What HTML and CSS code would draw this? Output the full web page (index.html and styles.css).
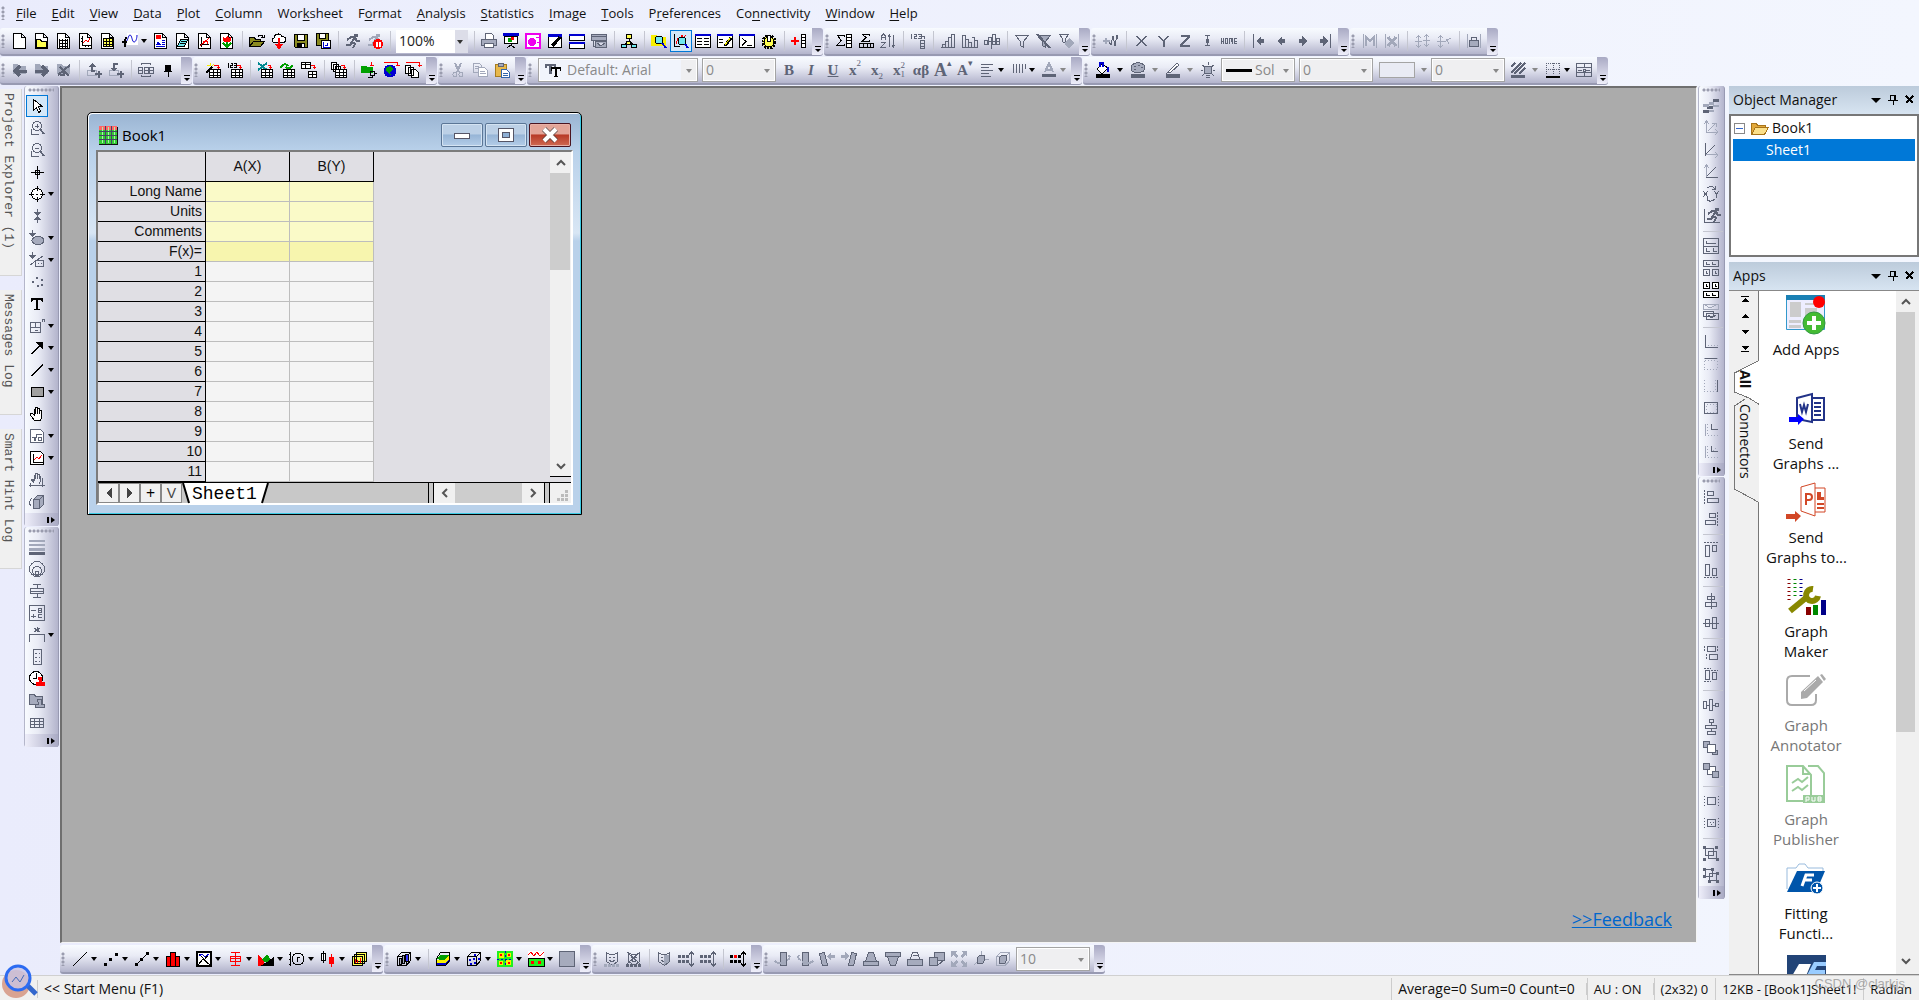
FILE: index.html
```html
<!DOCTYPE html>
<html lang="en">
<head>
<meta charset="utf-8">
<title>Book1</title>
<link rel="stylesheet" href="styles.css">
</head>
<body>
<svg class="defs" aria-hidden="true">
<symbol id="doc" viewBox="0 0 16 16"><path class="w" d="M1.5.5h8l4 4v11h-12zM9.5.5v4h4"/></symbol>
<symbol id="gr" viewBox="0 0 16 16"><path class="w" d="M4.5 7.5h11v8h-11zM4.5 10.5h11M4.5 13h11M8.5 8v7M12.5 8v7"/></symbol>
<symbol id="folder" viewBox="0 0 16 16"><path class="f l" d="M1 2h5l1 2h7v8H1z"/></symbol>
<symbol id="lens" viewBox="0 0 16 16"><circle cx="8" cy="6" r="4.5"/><path stroke-width="2" d="M11 9l4 5"/><path d="M2.5 9v5.500h7"/></symbol>
<symbol id="run" viewBox="0 0 16 16"><circle class="f" cx="11" cy="2.500" r="2"/><path stroke-width="2" d="M2 7l4-3h4l-3 5 3 2-2 4M7 9l-2 3H1M10 5l2 3h3"/></symbol>
<symbol id="cube" viewBox="0 0 16 16"><path d="M1.500 5.500l4-4h9v8l-4 5h-9zM1.500 5.500h9v9M10.500 5.500l4-4"/></symbol>
<symbol id="pin" viewBox="0 0 12 12"><path d="M3.500 1.500h5v5h-5zM1 6.500h10M6 7v4M7.500 2v4"/></symbol>
<symbol id="x" viewBox="0 0 12 12"><path stroke-width="2" d="M2 2l7 7M9 2l-7 7"/></symbol>
<symbol id="mask" viewBox="0 0 16 16"><path d="M2.500 1.500l3 2h5l3-2v9l-5 4-6-4zM5 6h2M9 6h2M5 9l3 2 3-2"/></symbol>
<symbol id="dots" viewBox="0 0 16 16"><path stroke-dasharray="3 1" stroke-width="3" d="M0 5.500h11M0 10.500h11"/><path d="M13.500 1v14M11 3.500l2.500-2.500 2.500 2.500M11 12.500l2.500 2.500 2.500-2.500"/></symbol>
</svg>

<nav class="menu" aria-label="Main menu">
<i class="grip"></i>
<a href="#"><u>F</u>ile</a><a href="#"><u>E</u>dit</a><a href="#"><u>V</u>iew</a><a href="#"><u>D</u>ata</a><a href="#"><u>P</u>lot</a><a href="#"><u>C</u>olumn</a><a href="#">Wor<u>k</u>sheet</a><a href="#">F<u>o</u>rmat</a><a href="#"><u>A</u>nalysis</a><a href="#"><u>S</u>tatistics</a><a href="#"><u>I</u>mage</a><a href="#"><u>T</u>ools</a><a href="#">P<u>r</u>eferences</a><a href="#">Co<u>n</u>nectivity</a><a href="#"><u>W</u>indow</a><a href="#"><u>H</u>elp</a>
</nav>

<div class="dock">
<div class="bar k"><i class="grip"></i>
<button title="New project"><svg><use href="#doc"/></svg></button>
<button title="New folder"><svg><use href="#doc"/><path class="yy" d="M2.500 6.500h4l1 2h5v6h-10z"/></svg></button>
<button title="New workbook"><svg><use href="#doc"/><path d="M3 7.500h9M3 10.500h9M3 13.500h9M3.500 6v9M6.500 6v9M9.500 6v9M11.500 6v9"/></svg></button>
<button title="New graph"><svg><use href="#doc"/><path d="M4.500 3v9.500h8M3 5h2M3 8h2M7 14v-2M10 14v-2"/><path class="r" d="M5 10l3-3 2 2 2-4"/></svg></button>
<button title="New matrix"><svg><use href="#doc"/><path class="yy" d="M3.500 5.500h9v8h-9zM3 8.500h9M3 11h9M6.500 5v9M9.500 5v9"/></svg></button>
<button class="d" title="New function"><svg><path class="f w" d="M5 0h11v12H5z"/><path class="b smooth" d="M3 9c3 0 3-7 5-7s2 7 4 7 3-4 3-7"/><path stroke-width="2" d="M5 5c-3 0-2 4-2 9M0 9h5"/></svg></button>
<button title="New layout"><svg><use href="#doc"/><path class="f r" d="M3 2h5v4H3z"/><path class="b" d="M9 7.500h3M9 9.500h3M9 11.500h3M3 13.500h9"/><path class="f b" d="M3 12l2-4 3 4z"/></svg></button>
<button title="New notes"><svg><use href="#doc"/><path class="cy" d="M5.500 6.500h7l-3 7h-7zM6 8.500h5M5 10.500h5"/></svg></button>
<button title="Digitize"><svg><use href="#doc"/><path d="M4.500 4v9.500M3 11.500h9"/><path class="r" d="M3 13L12 5M6 8h4v3"/></svg></button>
<button title="New image"><svg><use href="#doc"/><path class="f r" d="M4 4l2 1 2-2 2 2 2-1v4l-4 2-4-2z"/><path class="n" stroke-width="2" d="M8 9v5M4 10l4 4 4-4"/></svg></button>
<i class="sep"></i>
<button title="Open"><svg><path class="ol" d="M.5 13.500v-9h5l1 2h5v2M.5 13.500l4-5h11l-4 5z"/><path d="M9 3.500c2-2 4-2 5 0M12 4.500h3v-3"/></svg></button>
<button title="Open from cloud"><svg><path class="w" d="M3 9.500c-3-1-2-4 0-4 0-5 7-6 8-2 5 0 5 6 1 6z"/><path class="r" stroke-width="2" d="M8 5v10M5 11l3 4 3-4"/></svg></button>
<button title="Save project"><svg><path class="ol" d="M1.500 1.500h13v13h-12l-1-1z"/><path class="w" d="M4.500 1.500h7v6h-7z"/><path class="f" d="M4 10h8v4H4z"/><path class="f w" d="M9 11h2v3H9z"/></svg></button>
<button title="Save template"><svg><path class="ol" d="M1.500.500h12v12h-12z"/><path class="w" d="M4.500.500h6v5h-6z"/><path class="w" d="M6.500 7.500h9v8h-9z"/><path class="b" d="M8.500 9v5h6M10 12h2v-2"/></svg></button>
<i class="sep"></i>
<button class="g" title="Recalculate"><svg><use href="#run"/></svg></button>
<button class="g" title="Stop"><svg><use href="#run" class="l"/><circle class="f r" cx="11" cy="11" r="5"/><path class="wh" stroke-width="2" d="M9.500 9v5M12.500 9v5"/></svg></button>
<i class="sep"></i>
<div class="combo zoom"><select aria-label="Zoom"><option>100%</option></select></div>
<i class="sep"></i>
<button class="g" title="Print"><svg><path class="w" d="M4.500 6.500v-6h6l2 2v4"/><path class="fl" d="M.5 6.500h15v6H.5z"/><path class="w" d="M3.500 10.500h9v4h-9z"/></svg></button>
<button title="Slide show"><svg><path class="f b" d="M0 0h16v3H0z"/><path class="w" d="M1.500 3.500h13v7h-13z"/><circle class="f n" cx="7" cy="7" r="2.500"/><path class="f r" d="M8 4h3v3H8z"/><path d="M8 11v2M4 15l4-3 4 3"/></svg></button>
<button title="Send to slide"><svg class="mg"><path class="w" stroke-width="2" d="M1 1h14v14H1z"/><circle class="f" cx="7" cy="9" r="4"/><path d="M11 4h3M12 9h2"/></svg></button>
<button title="Custom routine"><svg><path class="w" d="M1.500 1.500h13v13h-13z"/><path class="f b" d="M1 1h14v3H1z"/><path stroke-width="3" d="M5 13l4-4 4-5"/></svg></button>
<button title="Tile"><svg><path class="w" d="M.5 1.500h15v6H.5zM.5 9.500h15v6H.5z"/><path class="f b" d="M0 1h16v2H0zM0 9h16v2H0z"/></svg></button>
<button class="g" title="Duplicate"><svg><path class="fl" d="M.5 1.500h15v6H.5zM4.500 8.500h11v6h-11zM1 3.500h14M2 13.500h3M2 8v5M6 10l4 3 4-3"/></svg></button>
<i class="sep"></i>
<button title="Project tree"><svg><path d="M8 4v4M3.500 12l4-4h1l4 4"/><path class="yy" d="M5.500 1.500h5v4h-5zM5.500 8.500h4v3h-4z"/><path class="cy" d="M.5 11.500h5v3h-5zM10.500 11.500h5v3h-5z"/></svg></button>
<i class="sep"></i>
<button title="Project explorer"><svg><path class="f y" d="M0 2h5l2 2h8v9H0z"/><circle class="cy" cx="8" cy="7" r="4"/><path class="b" stroke-width="2" d="M11 10l4 5"/></svg></button>
<button class="on" title="Object manager"><svg><path d="M1.500 1v12.500h5"/><path class="r" d="M3 11l2-6 2 2 2-5 1 3 3-3"/><circle class="cy" cx="9" cy="8" r="4"/><path class="b" stroke-width="2" d="M12 11l3 4"/></svg></button>
<button title="Results log"><svg><path class="w" d="M.5 1.500h15v13H.5z"/><path class="f b" d="M0 1h16v2H0z"/><path d="M2 5.500h5M9 5.500h5M2 8.500h5M9 8.500h5M2 11.500h5M9 11.500h5"/></svg></button>
<button title="Script window"><svg><path class="w" d="M.5 1.500h15v13H.5z"/><path class="f b" d="M0 1h16v2H0z"/><path d="M2 6.500h4M2 9.500h4"/><path stroke-width="3" d="M8 13l6-8"/><path class="y" d="M8 12l6-8"/></svg></button>
<button title="Command window"><svg><path class="w" d="M.5 1.500h15v13H.5z"/><path class="f b" d="M0 1h16v2H0z"/><path d="M3 5l4 3.500-4 4M8 12.500h5"/></svg></button>
<button title="Code builder"><svg><circle class="yy" stroke-dasharray="2 1" stroke-width="3" cx="8" cy="9" r="6"/><circle class="yy" cx="8" cy="9" r="5"/><path class="w" d="M6.500 2.500h3v6h-3z"/></svg></button>
<i class="sep"></i>
<button title="Add column"><svg><path class="r" stroke-width="2" d="M0 8h8M4 4v8"/><path class="w" d="M10.500 1.500h4v13h-4zM10 4.500h5M10 7.500h5M10 10.500h5"/></svg></button>
<button class="m" title="Toolbar options"></button></div>

<div class="bar g"><i class="grip"></i>
<button class="k" title="Column statistics"><svg><path d="M8 4V2.500H1.500L5 7.500l-4 5h7V11"/><path class="w" d="M10.500 1.500h5v13h-5zM10 4.500h5M10 7.500h5M10 10.500h5"/></svg></button>
<button class="k" title="Row statistics"><svg><path d="M11 3V1.500H4.500L8 4.500l-4 4h7V7M1.500 10.500h14v4h-14zM5.500 10v5M9 10v5M12.500 10v5"/></svg></button>
<button title="Sort"><svg><path d="M1.500 7V3l2-2 2 2v4M1 4.500h4M1 9.500h4l-4 5h5M9.500 2v12M8 4l1.500-2 1.500 2M13.500 2v12M12 12l1.500 2 1.500-2"/></svg></button>
<i class="sep"></i>
<button title="Set column values"><svg><path d="M1.500 1v5M4 1.500h2v2H4v2h3M8 1.500h3v4H8M9 3.500h2M12 3h2v3"/><path d="M10.500 7.500h4v8h-4zM10 10.500h5M10 13h5"/></svg></button>
<i class="sep"></i>
<button title="Normal"><svg><path d="M.5 14.500h14v-13h-3v13M11.500 4.500h-3v10M8.500 8.500h-3v6M5.500 11.500h-3v3"/></svg></button>
<button title="Histogram"><svg><path d="M.5 14.500v-12h3v12M3.500 6.500h3v8M6.500 9.500h3v5M9.500 4.500h3v10M12.500 7.500h3v7H.5"/></svg></button>
<button title="Discrete"><svg><path d="M.5 11.500v-4h3v4zM4.500 11.500v-7h3v11M8.500 1.500h3v10h-3zM12.500 5.500h3v6h-3zM4 8h11"/></svg></button>
<i class="sep"></i>
<button title="Filter"><svg><path d="M1.500 2.500h13l-5 6v6l-3-2v-4z"/></svg></button>
<button title="Disable filter"><svg><path class="fl" d="M1.500 2.500h13l-5 6v6l-3-2v-4z"/><path stroke-width="2" d="M1 1l13 14"/></svg></button>
<button title="Reapply filter"><svg><path d="M1.500 1.500h9l-3 4v5l-3-2v-3z"/><path class="f l" d="M7 9l4-4 5 5-5 5-4-3z"/></svg></button>
<button class="m" title="Toolbar options"></button></div>

<div class="bar g"><i class="grip"></i>
<button title="Add plot"><svg><path stroke-width="2" class="l" d="M0 8h7M3 5v6"/><path d="M6 9l2 3 2-9 2 10 2-11 1 4"/></svg></button>
<i class="sep"></i>
<button title="X"><svg><path d="M3 3l10 10M13 3L3 13"/><path d="M4 3l10 10M14 3L4 13"/></svg></button>
<button title="Y"><svg><path d="M3 3l5 5v6M13 3L8 8M4 3l5 5v6M14 3L9 8"/></svg></button>
<button title="Z"><svg><path stroke-width="2" d="M4 3h8v1l-8 8v1h9"/></svg></button>
<button title="Error bar"><svg><path d="M5.500 2.500h5M5.500 12.500h5M8 3v10"/><path class="f" d="M7 6h3v4H7z"/></svg></button>
<button title="Home"><svg><path d="M.5 5v6M2.500 5v6M.5 8h2M4.500 5.500h2v5h-2zM8.500 11V5.500h3V11M10 6v3M16 5.500h-2.500v5H16M13 8h3"/></svg></button>
<i class="sep"></i>
<button title="First"><svg><path class="f" d="M2 1h1v14H2zM5 8l5-5v3h3v4h-3v3z"/></svg></button>
<button title="Previous"><svg><path class="f" d="M4 8l5-5v3h3v4H9v3z"/></svg></button>
<button title="Next"><svg><path class="f" d="M12 8L7 3v3H4v4h3v3z"/></svg></button>
<button title="Last"><svg><path class="f" d="M11 8L6 3v3H3v4h3v3zM13 1h1v14h-1z"/></svg></button>
<button class="m" title="Toolbar options"></button></div>

<div class="bar l"><i class="grip"></i>
<button title="Mask"><svg><path d="M1.500 1v14M14.500 1v14"/><path stroke-width="2" d="M4 13V4l4 4 4-4v9"/></svg></button>
<button title="Unmask"><svg><path d="M1.500 1v14M14.500 1v14"/><path stroke-width="3" d="M4 4l8 9M12 4l-8 9"/></svg></button>
<i class="sep"></i>
<button title="Move up"><svg><path d="M4.500 3v11M1 8h7M2 5l2.500-2L7 5M2 12l2.500 2L7 12M12.500 2v11M9 7h7M10 4l2.500-2L15 4M10 11l2.500 2 2.500-2"/></svg></button>
<button title="Move down"><svg><path d="M4.500 3v11M1 8h7M2 5l2.500-2L7 5M2 12l2.500 2L7 12M8 9l7-4M10 6l3 5"/></svg></button>
<i class="sep"></i>
<button class="g" title="Lock"><svg><path class="l" d="M1.500 1v14M14.500 1v14"/><path class="fl" d="M3.500 7.500h9v6h-9z"/><path d="M5.500 7V4h5v3"/></svg></button>
<button class="m" title="Toolbar options"></button></div>
</div>

<div class="dock">
<div class="bar g"><i class="grip"></i>
<button title="Back"><svg><use href="#folder"/><path stroke-width="3" d="M15 9H4M8 4L3 9l5 5"/></svg></button>
<button title="Forward"><svg><use href="#folder"/><path stroke-width="3" d="M1 9h11M8 4l5 5-5 5"/></svg></button>
<button title="Up"><svg><use href="#folder"/><path stroke-width="2" d="M2 13L14 3M4 5l9 9M4 13h4V9"/></svg></button>
<i class="sep"></i>
<button title="Import up"><svg><path class="l" d="M1.500 8.500h9v5h-9z"/><path class="f" d="M2 5l4-4 4 4H7v3H9v2H5V5z"/><path stroke-width="2" d="M9 12h7M12.500 8.500v7"/></svg></button>
<button title="Import down"><svg><path class="l" d="M1.500 8.500h9v5h-9z"/><path class="f" d="M2 6l4 4 3-4H7V3h3V1H5v5z"/><path stroke-width="2" d="M9 12h7M12.500 8.500v7"/></svg></button>
<i class="sep"></i>
<button title="Batch"><svg><path d="M3.500 3v-1.500h9V3M3.500 13v1.500h9V13M.5 5.500h4v6h-4zM6 5.500h4v6H6zM11.500 5.500h4v6h-4zM0 8h5M6 8h4M11 8h5"/></svg></button>
<button class="k" title="Pin"><svg><path class="f" d="M5 3h6v6H5zM4 9h8v1H4zM7.500 10h1v5h-1z"/></svg></button>
<button class="m" title="Toolbar options"></button></div>

<div class="bar k"><i class="grip"></i>
<button title="Import wizard"><svg><path stroke-width="2" d="M1 11l6-6"/><path class="y" d="M5 1v3M2 3l3 1M9 2L7 4"/><path class="r" d="M9 3.500h4.500V7M12 5.500h3"/><use href="#gr"/></svg></button>
<button title="Import single"><svg><path d="M1.500 1v5M3.500 1.500h2v2h-2v2h2M7 1.500h2v4H7M7 3.500h2"/><path class="r" d="M10 3.500h3.500V7M12 5.500h3"/><use href="#gr"/></svg></button>
<i class="sep"></i>
<button title="Import spreadsheet"><svg><path class="t" stroke-width="2" d="M1 1l9 7M10 1L1 8"/><path class="r" d="M11 3.500h2.500V7M12 5.500h3"/><use href="#gr"/></svg></button>
<button title="Re-import"><svg><path class="n" stroke-width="2" d="M2 6c1-5 6-4 7-2M13 3c0 3-4 4-6 2"/><use href="#gr"/></svg></button>
<button title="Connect table"><svg><path class="w" d="M.5.500h9v6h-9zM.5 2.500h9M4.500 1v6M7.500 9.500h8v6h-8zM7.500 12h8M11.500 10v6"/><path class="r" d="M10 3.500h3.500V7M12 5.500h3"/></svg></button>
<i class="sep"></i>
<button title="Multiple files"><svg><path class="w" d="M.5.500h5v7h-5zM2.500 2.500h5v7h-5zM4.500 4.500h5v7h-5z"/><path class="r" d="M10 3.500h3.500V7M12 5.500h3"/><use href="#gr"/></svg></button>
<i class="sep"></i>
<button title="Database"><svg><path class="f n" d="M0 4h5l1 1h6v6H0z"/><path class="r" d="M10.500 0v4M8.500 3h4"/><path d="M9.500 9.500h4v4h-4zM13 11.500h3M11.500 13v2h-5"/></svg></button>
<button title="Web import"><svg><circle class="f b" cx="7" cy="9" r="6.500"/><path class="f n" d="M4 5l4-1 2 3-3 3 1 3-3-2-2-3z"/><path class="r" d="M1 .5h13.500V4M12.500 3h4"/></svg></button>
<button title="Copy files"><svg><path class="w" d="M.5 3.500h5v8h-5zM3.500 5.500h5v8h-5zM6.500 7.500h4l3 3v5h-7z"/><path class="r" d="M1 .5h13.500V5M12.500 3h4"/></svg></button>
<button class="m" title="Toolbar options"></button></div>

<div class="bar l"><i class="grip"></i>
<button title="Cut"><svg><path stroke-width="2" d="M5 1l4 9M11 1L7 10"/><circle cx="5" cy="12.500" r="2"/><circle cx="11" cy="12.500" r="2"/></svg></button>
<button title="Copy"><svg><path d="M1.500 1.500h6l2 2v7h-8zM3 4h4M3 6h5"/><path class="w" d="M6.500 5.500h6l3 3v6h-9zM8 9h5M8 11h6"/></svg></button>
<button title="Paste"><svg><path class="go" d="M1.500 2.500h11v12h-11z"/><path class="fl g" d="M4.500 1.500h5v3h-5z"/><path class="w bl" d="M7.500 7.500h5l3 3v5h-8zM9 11h5M9 13h5"/></svg></button>
<button class="m" title="Toolbar options"></button></div>

<div class="bar g"><i class="grip"></i>
<div class="combo dis font"><svg class="tt"><path class="f" d="M0 2h11v4H9V4H7v8H4V4H2v2H0z"/><path class="f blk" d="M6 5h10v4h-1V7h-3v7h1v1H9v-1h1V7H7v2H6z"/></svg><select aria-label="Font" disabled><option>Default: Arial</option></select></div>
<div class="combo dis"><select aria-label="Font size" disabled><option>0</option></select></div>
<button class="ser" title="Bold">B</button>
<button class="ser it" title="Italic">I</button>
<button class="ser un" title="Underline">U</button>
<button class="ser" title="Superscript">x<sup>2</sup></button>
<button class="ser" title="Subscript">x<sub>2</sub></button>
<button class="ser" title="Super and subscript">x<span class="both"><b>2</b><b>1</b></span></button>
<button class="ser" title="Greek">αβ</button>
<button class="ser big" title="Increase font">A<sup>▴</sup></button>
<button class="ser" title="Decrease font">A<sup>▾</sup></button>
<button class="d" title="Alignment"><svg><path d="M2 2.500h12M2 5.500h8M2 8.500h12M2 11.500h8M2 14.500h10"/></svg></button>
<button class="d" title="Line spacing"><svg><path d="M3.500 2v9M6.500 2v9M9.500 2v9M12.500 2v9M15 2v5"/></svg></button>
<button class="d ga" title="Font color"><svg><path class="l" stroke-width="2" d="M4 10l4-9 4 9M5 7.500h6"/><path class="f" d="M1 12h14v3H1z"/></svg></button>
<button class="m" title="Toolbar options"></button></div>

<div class="bar g"><i class="grip"></i>
<button class="d wide k" title="Fill color"><svg><path class="w" d="M2 7l5-5 6 4-6 6z"/><path class="b" stroke-width="2" d="M5 5V1h3v4M13 5v5"/><path class="f" d="M1 12h14v4H1z"/></svg></button>
<button class="d wide ga" title="Palette"><svg><path class="fl" d="M2 3c3-3 9-3 12 0 2 3 0 7-3 7H4C0 9 1 6 2 3zM4 4h2M8 3h2M4 7h2M11 5h2"/><path class="f" d="M1 12h14v4H1z"/></svg></button>
<button class="d wide ga" title="Line color"><svg><path class="w" d="M4 9l8-8 2 2-8 7-4 1z"/><path class="f" d="M1 12h14v4H1z"/></svg></button>
<button title="Lighting"><svg><circle class="fl" cx="8" cy="8" r="4"/><path d="M8 0v3M1 8h2M13 8h2M2 3l3 2M14 3l-3 2M2 14l3-3M14 14l-3-3M6 13h4M6 15h4"/></svg></button>
<div class="combo dis line"><svg class="ln"><path class="blk" stroke-width="3" d="M0 8h26"/></svg><select aria-label="Line style" disabled><option>Sol</option></select></div>
<div class="combo dis"><select aria-label="Line width" disabled><option>0</option></select></div>
<button class="swatch ga" title="Pattern color"><i></i></button>
<div class="combo dis"><select aria-label="Pattern width" disabled><option>0</option></select></div>
<button class="d wide ga" title="Fill pattern"><svg><path stroke-width="2" d="M1 5l4-4M1 11L11 1M4 12L15 1M9 12l6-6"/><path class="f" d="M1 13h14v3H1z"/></svg></button>
<button class="d" title="Borders"><svg><path stroke-dasharray="1 1" d="M1.500 1v11M8 1v11M14.500 1v11M1 1.500h14M1 7h14"/><path class="blk" stroke-width="2" d="M1 14.500h14"/></svg></button>
<button title="Merge cells"><svg><path d="M.5 1.500h15v13H.5zM0 5.500h16M0 10.500h16M8 1v4M8 11v4M2 8h4M10 8h4M7 7h2v2H7z"/></svg></button>
<button class="m" title="Toolbar options"></button></div>
</div>

<main class="main">
<div class="sidetabs"><button>Project Explorer (1)</button><button>Messages Log</button><button>Smart Hint Log</button></div>

<div class="vdock">
<div class="vbar g"><i class="grip"></i>
<button class="on k" title="Pointer"><svg><path class="w" d="M4.500 1.500v11l3-3 2 5 2-1-2-5h4z"/></svg></button>
<button title="Zoom in"><svg><use href="#lens"/><path d="M6 6h4M8 4v4"/></svg></button>
<button title="Zoom out"><svg><use href="#lens"/><path d="M6 6h4"/></svg></button>
<button class="k" title="Reader"><svg><path d="M8.500 2v13M2 8.500h13M6.500 6.500h4v4h-4z"/></svg></button>
<button class="d k" title="Data reader"><svg><circle class="w" cx="8" cy="8" r="5.500"/><path d="M8 0v5M8 11v5M0 8h5M11 8h5M7 8h2"/></svg></button>
<button title="Selector"><svg><path d="M8.500 1v4M8.500 11v4"/><path class="f" d="M5 4h7l-3.500 4zM5 12h7L8.500 8z"/></svg></button>
<button class="d" title="Select region"><svg><ellipse class="fl" cx="9" cy="10.500" rx="6" ry="4"/><path class="f" d="M3 0h1v3h3L3.500 7 0 3h3z"/></svg></button>
<button class="d" title="Mask points"><svg><path class="f" d="M3 0h1v3h3L3.500 7 0 3h3z"/><path d="M1 13L14 4M6.500 8.500h8v6h-8zM9 11h1M12 11h1"/></svg></button>
<button title="Draw data"><svg><path stroke-width="2" d="M3 8h2M7 4h2M12 6h2M8 12h2M12 11h2"/></svg></button>
<button class="k" title="Text"><svg><path class="f" d="M2 2h12v4h-1L12 4H9v9h2v1H5v-1h2V4H4L3 6H2z"/></svg></button>
<button class="d" title="Insert graph"><svg><path d="M1.500 4.500h10v10h-10zM6.500 4v5M1 9.500h10M13 4V1h2v3M6 12h3"/></svg></button>
<button class="d k" title="Arrow"><svg><path d="M2 14l9-9M3 14l9-9"/><path class="f" d="M6 2h8v8z"/></svg></button>
<button class="d k" title="Line"><svg><path d="M2 14L14 2M3 14L14 3"/></svg></button>
<button class="d k" title="Rectangle"><svg><path class="gf" d="M2.500 3.500h12v9h-12z"/></svg></button>
<button class="k" title="Pan"><svg><path class="w" d="M5.500 14.500L1.500 9v-1.500h2l2 2V3.500h1v4-6h2v6-5h2v5-3h2v7l-1 3z"/></svg></button>
<button class="d" title="Equation"><svg><path class="w" d="M1.500 1.500h10l3 3v10h-13z"/><path d="M3 9h2l1 4 2-7h5M9 9h3v3H9z"/></svg></button>
<button class="d k" title="New graph"><svg><path class="w" d="M1.500 1.500h10l3 3v10h-13z"/><path d="M4.500 4v8h9"/><path class="r" d="M5 10l3-3 2 2 3-4"/></svg></button>
<button title="Rescale"><svg><path d="M5 11L2 7h2l1 2V3h1v4-6h2v6-5h2v5-3h1v6l-1 2M0 13.500h16M13.500 6v9M1 11v4"/></svg></button>
<button title="Rotate"><svg><path class="fl" d="M4.500 5.500l4-4h6v9l-4 4h-6zM4.500 5.500h6v9M10.500 5.500l4-4"/><path d="M3 4c-3 2-3 6-1 8"/></svg></button>
<button class="m" title="Toolbar options"></button></div>
<div class="vbar g"><i class="grip"></i>
<button title="Line spacing"><svg><path class="f l" d="M0 1h16v2H0zM0 5h16v2H0zM0 9h16v3H0z"/><path class="f" d="M0 13h16v3H0z"/></svg></button>
<button title="Circles"><svg><circle cx="8" cy="8" r="7.500"/><circle cx="8" cy="10" r="4.500"/><circle cx="8" cy="12" r="2"/></svg></button>
<button title="Distribute"><svg><path d="M4 1.500h8M4 14.500h8M8 1v4M8 11v4M1.500 5.500h13v5h-13zM1 8h14"/></svg></button>
<button title="Legend"><svg><path d="M.5.500h15v15H.5zM2 5h5M2 11h5M4.500 9v4M9 3h3v4H9zM9 5h3M13 9.500H9.500v3H13"/></svg></button>
<button class="d" title="Asterisk bracket"><svg><path d="M8 0v5M5 1l6 4M11 1L5 5M.5 15V7.500h15V15"/></svg></button>
<button title="Color scale"><svg><path d="M4.500.500h8v15h-8zM6 4h2M6 8h2M6 12h2M10 4h1M10 8h1M10 12h1"/></svg></button>
<button class="k" title="Date and time"><svg><circle class="w" cx="7" cy="7" r="6.500"/><path d="M7 2v5H4"/><path class="f r" d="M9 6h4v5h3v4H7v-4h3z"/></svg></button>
<button title="Project stamp"><svg><path class="fl" d="M.5 1.500h5l1 2h7v8H.5z"/><path class="fl" d="M8.500 6.500h4v5h3v3h-9v-3h3z"/></svg></button>
<button title="New table"><svg><path d="M1.500 3.500h13v9h-13zM1 6.500h13M1 9.500h13M5.500 3v10M10 3v10"/></svg></button>
<button class="m" title="Toolbar options"></button></div>
</div>

<div class="center">
<section class="mdi">
<article class="win">
<header class="title"><svg class="book"><path fill="#3c3" stroke="none" d="M1 1h18v18H1z"/><path fill="#f66" stroke="none" d="M1 1h18v4H1z"/><path stroke="#aaf0aa" d="M4 2v16M10 2v16M16 2v16"/><path stroke="#446" d="M1 6.500h18M1 10.500h18M1 14.500h18M7 1v18M13 1v18"/><path stroke="#111" d="M1 19.500h18.500V2"/></svg><h1>Book1</h1>
<button title="Minimize"><svg><path stroke="#556" fill="#fff" d="M1.500 6.500h15v5h-15z"/></svg></button>
<button title="Maximize"><svg><path fill="#fff" stroke="#556" d="M1.500 1.500h15v13h-15z"/><path fill="#8fb0d4" stroke="#556" d="M5.500 5.500h7v5h-7z"/></svg></button>
<button class="close" title="Close"><svg class="smooth"><path stroke="#444a" stroke-width="6" d="M3 2l12 12M15 2L3 14"/><path stroke="#fff" stroke-width="4" d="M3 2l12 12M15 2L3 14"/></svg></button></header>
<div class="client">
<div class="view">
<div class="cells"><table>
<thead><tr><th></th><th>A(X)</th><th>B(Y)</th></tr></thead>
<tbody>
<tr class="lab"><th>Long Name</th><td></td><td></td></tr>
<tr class="lab"><th>Units</th><td></td><td></td></tr>
<tr class="lab"><th>Comments</th><td></td><td></td></tr>
<tr class="lab fx"><th>F(x)=</th><td></td><td></td></tr>
<tr><th>1</th><td></td><td></td></tr><tr><th>2</th><td></td><td></td></tr><tr><th>3</th><td></td><td></td></tr><tr><th>4</th><td></td><td></td></tr><tr><th>5</th><td></td><td></td></tr><tr><th>6</th><td></td><td></td></tr><tr><th>7</th><td></td><td></td></tr><tr><th>8</th><td></td><td></td></tr><tr><th>9</th><td></td><td></td></tr><tr><th>10</th><td></td><td></td></tr><tr><th>11</th><td></td><td></td></tr><tr><th></th><td></td><td></td></tr>
</tbody></table></div>
<div class="vscroll sheet"><button title="Scroll up"><svg class="chev"><path d="M2 8l4-4 4 4"/></svg></button><i class="thumb"></i><button title="Scroll down"><svg class="chev"><path d="M2 4l4 4 4-4"/></svg></button></div>
</div>
<footer class="tabs">
<button title="Previous sheet"><svg><path class="f" d="M11 3v10L5 8z"/></svg></button><button title="Next sheet"><svg><path class="f" d="M5 3v10l6-5z"/></svg></button><button class="pl" title="Add sheet">+</button><button class="v" title="Sheet list">V</button>
<a href="#" class="tab"><svg class="tabshape"><path class="w" stroke="none" d="M0 0h86l-6 20H8z"/><path stroke="#000" stroke-width="2" d="M1 0l6 20M86 0l-6 20"/></svg><span>Sheet1</span></a>
<i class="rest"></i>
<div class="hscroll"><button title="Scroll left"><svg class="chev"><path d="M8 2L4 6l4 4"/></svg></button><i></i><button title="Scroll right"><svg class="chev"><path d="M4 2l4 4-4 4"/></svg></button></div>
<i class="size"><svg><path class="f" d="M9 1h3v3H9zM5 5h3v3H5zM9 5h3v3H9zM1 9h3v3H1zM5 9h3v3H5zM9 9h3v3H9z"/></svg></i>
</footer>
</div>
</article>
<a href="#" class="feedback">&gt;&gt;Feedback</a>
</section>

<div class="dock low">
<div class="bar k"><i class="grip"></i>
<button class="d" title="Line plot"><svg><path d="M1 15L15 1"/></svg></button>
<button class="d" title="Scatter plot"><svg><path class="f" d="M1 12h3v3H1zM6 7h3v3H6zM12 2h3v3h-3z"/></svg></button>
<button class="d" title="Line and symbol"><svg><path d="M2 14L14 2"/><path class="f" d="M1 12h3v3H1zM6 7h3v3H6zM12 1h3v3h-3z"/></svg></button>
<button class="d" title="Column plot"><svg class="blk"><path class="rf" d="M1.500 5.500h4v10h-4zM5.500 1.500h5v14h-5zM10.500 5.500h4v10h-4z"/></svg></button>
<button class="d" title="Multi panel"><svg><path class="w" stroke-width="2" d="M1 1h14v14H1z"/><path d="M2 14l5-6 7 6M3 3l9 9M13 3l-5 6"/><path class="b" d="M3 5l3-2 3 3 4-3"/></svg></button>
<button class="d" title="Box plot"><svg class="r"><path d="M4 1.500h9M4 14.500h9M8.500 1v14M3.500 5.500h10v5h-10z"/><path d="M3 7.500h10"/></svg></button>
<button class="d" title="Area plot"><svg><path class="f r" d="M0 4l5 5 3 6H0z"/><path class="f n" d="M4 9l5-6 4 6-4 3z"/><path class="f" d="M2 15l7-4 7-5v9z"/></svg></button>
<button class="d" title="Polar plot"><svg><path d="M1.500 1v14M0 3h2M0 8h2M0 13h2"/><circle cx="9" cy="8" r="6"/><path d="M8 11V6M8 7l3-1"/></svg></button>
<button class="d" title="Stock plot"><svg><path class="w" d="M3.500 0v12M1.500 2.500h4v7h-4z"/><path class="r" d="M11.500 3v13"/><path class="f r" d="M9 6h5v7H9z"/></svg></button>
<button title="Template library"><svg><path class="yy" d="M5.500 1.500h10v9h-10zM3.500 3.500h10v9h-10zM1.500 5.500h10v9h-10z"/><path class="r" d="M4 12V8M6.500 12v-3M9 12V7"/></svg></button>
<button class="m" title="Toolbar options"></button></div>
<div class="bar k"><i class="grip"></i>
<button class="d" title="3D bars"><svg><use href="#cube"/><path class="fl" d="M3.500 7.500h2v6h-2zM6.500 4.500h2v8h-2z"/><path class="bf" d="M9.500 3.500h3v7h-3z"/></svg></button>
<i class="sep"></i>
<button class="d" title="3D surface"><svg><path class="f b" d="M1 11h10l4-5v4l-4 5H1z"/><path class="f n" d="M2 8l3-4h9l-4 6z"/><path class="f y" d="M1 9h9l5-6v4l-4 5H1z"/><path d="M1.500 9.500v5h9l4-5v-8h-9l-4 6z"/></svg></button>
<button class="d" title="3D scatter"><svg><use href="#cube"/><path class="f b" d="M3 8h2v2H3zM7 7h2v2H7zM4 12h2v2H4zM8 11h2v2H8zM8 3h2v2H8zM12 7h2v2h-2z"/></svg></button>
<button class="d" title="Contour"><svg><path class="f ln2" d="M0 0h16v16H0z"/><path class="f y" d="M2 2h5v5H2zM9 9h5v5H9zM2 10h4v4H2zM10 2h4v4h-4z"/><path class="f r" d="M3 3h2v2H3zM11 11h2v2h-2zM3 11h2v2H3zM11 3h2v2h-2z"/><path class="b" stroke-dasharray="2 2" d="M8 0v16M0 8h16"/></svg></button>
<button class="d" title="Contour profile"><svg><path class="f wh" d="M0 0h16v7H0z"/><path class="r" d="M0 4l3-3 3 4 3-4 3 4 4-4"/><path class="f ln2" d="M0 8h16v8H0z"/><path d="M0 7.500h16v8H0z"/><path class="f r" d="M3 10h3v3H3zM10 10h3v3h-3z"/></svg></button>
<button class="g" title="Image plot"><svg><path class="fl" d="M.5.500h15v15H.5z"/></svg></button>
<button class="m" title="Toolbar options"></button></div>
<div class="bar g"><i class="grip"></i>
<button title="Mask region"><svg><use href="#mask"/><path stroke-dasharray="3 1" stroke-width="3" class="l" d="M0 14.500h16"/></svg></button>
<button title="Unmask region"><svg><use href="#mask"/><path d="M1 1l13 12M14 1L1 13"/><path stroke-dasharray="3 1" stroke-width="3" d="M0 14.500h16"/></svg></button>
<i class="sep"></i>
<button title="Mask color"><svg><use href="#mask"/><path class="f l" d="M8 4h5v7l-5 3z"/></svg></button>
<button title="Hide mask"><svg><use href="#dots"/></svg></button>
<button title="Swap mask"><svg><use href="#dots"/></svg></button>
<i class="sep"></i>
<button class="k" title="Enable mask"><svg><use href="#dots"/><path class="f r" d="M4 4h3v3H4z"/></svg></button>
<button class="m" title="Toolbar options"></button></div>
<div class="bar g"><i class="grip"></i>
<button title="Rotate left"><svg><path class="fl" d="M5.500 1.500h6v13h-6z"/><path class="l" stroke-width="2" d="M0 10c3 3 8 3 11 1M12 9c3-1 3-3 2-5"/></svg></button>
<button title="Rotate right"><svg><path class="fl" d="M5.500 1.500h6v13h-6z"/><path class="l" stroke-width="2" d="M16 10c-3 3-8 3-11 1M4 9C1 8 1 6 2 4"/></svg></button>
<button title="Tilt left"><svg><path class="fl" d="M.5 2.500l5-1 3 13-5 .500z"/><path class="f l" d="M8 5l4-4v3h4v3h-4v3z"/></svg></button>
<button title="Tilt right"><svg><path class="fl" d="M15.500 2.500l-5-1-3 13 5 .500z"/><path class="f l" d="M8 5L4 1v3H0v3h4v3z"/></svg></button>
<button title="Tilt up"><svg><path class="fl" d="M5.500 1.500h5l3 9h-11zM.5 10.500h15v4H.5z"/></svg></button>
<button title="Tilt down"><svg><path class="fl" d="M5.500 14.500h5l3-9h-11zM.5 1.500h15v4H.5z"/></svg></button>
<button title="Perspective"><svg><path class="fl" d="M.5 8.500h15v6H.5z"/><path d="M3 8l3-7h4l3 7M5.500 4.500h5"/></svg></button>
<button title="Offset"><svg><path class="fl" d="M5.500 1.500h10v8h-10z"/><path class="fl" d="M.5 6.500h8v8h-8z"/><path d="M9 14l6-5"/></svg></button>
<button title="Fit"><svg><path class="f l" d="M0 0h6L4 2l3 3-2 2-3-3-2 2zM16 0v6l-2-2-3 3-2-2 3-3-2-2zM0 16v-6l2 2 3-3 2 2-3 3 2 2zM16 16h-6l2-2-3-3 2-2 3 3 2-2z"/></svg></button>
<button title="Reset rotation"><svg><path class="l" d="M8 0v8l-7 6M8 8h8"/><path class="fl" d="M4.500 6.500l2-2h5v5l-2 3h-5z"/></svg></button>
<button title="Reset"><svg><use href="#cube" class="l"/><path class="fl" d="M4.500 6.500l2-2h5v5l-2 3h-5z"/></svg></button>
<div class="combo dis"><select aria-label="Rotation angle" disabled><option>10</option></select></div>
<button class="m" title="Toolbar options"></button></div>
</div>
</div>

<div class="vdock right">
<div class="vbar g"><i class="grip"></i>
<button title="Antialias"><svg><path class="f" d="M0 12h6v3H0zM4 8h6v3H4zM10 1h6v3h-6z"/><path class="f l" d="M0 6h6v3H0zM6 4h5v3H6zM6 12h5v2H6zM10 7h6v2h-6z"/></svg></button>
<button class="l" title="Rescale XYZ"><svg><path d="M3.500 2v10h11M1 4l2.500-3L6 4M12 9l3 3-3 3M5 11l8-8M9 3h4v4"/></svg></button>
<button title="Exchange left"><svg><path d="M2.500 1v13"/><path class="l" d="M3 12.500h12M12 10l3 3-3 3"/><path d="M3 12l9-9"/></svg></button>
<button title="Exchange right"><svg><path class="l" d="M3.500 1v12M1 4l2.500-3L6 4"/><path d="M3 13.500h12M4 12l9-9"/></svg></button>
<button title="Exchange X-Y"><svg><path d="M0 5l5 6M5 5L0 11M11 5l2.500 3v4M16 5l-2.500 3M4 2c3-2 6-2 8 1M12 0v3H9M4 14c3 2 6 1 8-1M4 11v3h3"/></svg></button>
<button title="Speed mode"><svg><path d="M1.500 1v13.500h15"/><g class="sm"><use href="#run"/></g></svg></button>
<i class="sep"></i>
<button title="Merge"><svg><path d="M.5.500h15v15H.5zM.5 8.500h15M3 3v2.500h10M3.500 10v3h3M10.500 10v3h3"/></svg></button>
<button title="Extract to layers"><svg><path d="M.5.500h15v6H.5zM3.500 2v2.500h3M9.500 2v2.500h3M.5 9.500h6v6h-6zM9.500 9.500h6v6h-6zM3 11v2.500h2M12 11v2.500h2"/></svg></button>
<button class="k" title="Extract to graphs"><svg><path class="w" d="M.5.500h6v6h-6zM9.500.500h6v6h-6zM3 2v2.500h2M12 2v2.500h2M.5 9.500h15v6H.5zM3.500 11v2.500h3M9.500 11v2.500h3"/></svg></button>
<button title="Duplicate layers"><svg><path class="l" d="M.5.500h15v5H.5zM2 1l5 3 6-3"/><path d="M.5 7.500h10v5h-10zM3.500 9.500h12v6h-12zM5 11l4 3 4-3"/></svg></button>
<i class="sep"></i>
<button title="Bottom left axis"><svg><path d="M2.500 1v12.500h12"/><path class="l" stroke-dasharray="1 2" d="M5 11h10"/></svg></button>
<button class="l" title="Top axis"><svg><path d="M1.500 2.500h13" class="g"/><path stroke-dasharray="1 2" d="M1.500 2v12M14.500 2v12M1 13.500h14M2 4h12"/></svg></button>
<button class="l" title="Right axis"><svg><path stroke-dasharray="1 2" d="M1.500 2v12M1 13.500h13M12 2v12"/><path class="g" d="M14.500 2v12"/></svg></button>
<button class="l" title="Frame"><svg><path class="g" d="M1.500 2.500h13v11h-13z"/><path stroke-dasharray="1 2" d="M3.500 4h10v8h-10z"/></svg></button>
<button class="l" title="Inset"><svg><path stroke-dasharray="1 2" d="M4 2v11h11"/><path d="M2.500 2v12"/><path class="g" d="M8.500 2v5h6"/></svg></button>
<button class="l" title="Inset with data"><svg><path stroke-dasharray="1 2" d="M4 2v11h11M10 7l4-4"/><path d="M2.500 2v12"/><path class="g" d="M8.500 2v5h6"/></svg></button>
<button class="m" title="Toolbar options"></button></div>
<div class="vbar g"><i class="grip"></i>
<button title="Align left"><svg><path stroke-dasharray="2 1" d="M1.500 1v14"/><path d="M4.500 2.500h6v4h-6zM4.500 9.500h11v4h-11z"/></svg></button>
<button title="Align right"><svg><path stroke-dasharray="2 1" d="M14.500 1v14"/><path d="M6.500 2.500h6v4h-6zM2.500 9.500h10v4h-10z"/></svg></button>
<i class="sep"></i>
<button title="Align top"><svg><path stroke-dasharray="2 1" d="M1 1.500h14"/><path d="M2.500 4.500h4v11h-4zM9.500 4.500h4v6h-4z"/></svg></button>
<button title="Align bottom"><svg><path stroke-dasharray="2 1" d="M1 14.500h14"/><path d="M2.500 1.500h4v11h-4zM9.500 5.500h4v7h-4z"/></svg></button>
<i class="sep"></i>
<button title="Center vertical"><svg><path d="M8 0v16M4.500 3.500h7v3h-7zM2.500 9.500h11v4h-11z"/></svg></button>
<button title="Center horizontal"><svg><path d="M0 8h16M2.500 4.500h4v7h-4zM9.500 2.500h4v11h-4z"/></svg></button>
<i class="sep"></i>
<button title="Same width"><svg><path d="M4.500 1.500h8v5h-8zM6.500 9.500h8v5h-8z"/><path stroke-dasharray="2 1" d="M1.500 1v6M14.500 1v6M3.500 9v6"/></svg></button>
<button title="Same height"><svg><path d="M2.500 3.500h4v9h-4zM9.500 5.500h4v7h-4z"/><path stroke-dasharray="2 1" d="M1 1.500h7M8 3.500h7M1 14.500h7"/></svg></button>
<i class="sep"></i>
<button title="Space horizontally"><svg><path d="M.5 4.500h3v7h-3zM6.500 2.500h3v11h-3zM12.500 6.500h3v3h-3zM4 8h2M10 8h2"/></svg></button>
<button title="Space vertically"><svg><path d="M6.500.500h4v3h-4zM2.500 6.500h11v3h-11zM4.500 12.500h8v3h-8zM8 4v2M8 10v2"/></svg></button>
<button title="Bring to front"><svg><path class="fl" d="M.5.500h6v6h-6zM9.500 9.500h5v4h-5z"/><path class="w" d="M4.500 3.500h8v8h-8z"/></svg></button>
<button title="Send to back"><svg><path class="w" d="M4.500 3.500h8v8h-8z"/><path class="fl" d="M.5.500h6v6h-6zM9.500 8.500h6v6h-6z"/></svg></button>
<i class="sep"></i>
<button title="Enlarge font"><svg><path d="M4.500 4.500h8v7h-8z"/><path stroke-dasharray="1 2" d="M1 3v10M15 3v10"/></svg></button>
<button title="Shrink font"><svg><path d="M4.500 4.500h8v7h-8zM7 7h1M10 7h1M8 9h1"/><path stroke-dasharray="1 2" d="M1 3v10M15 3v10"/></svg></button>
<i class="sep"></i>
<button title="Group"><svg><path d="M2.500 3.500h8v7h-8zM5.500 6.500h8v7h-8z"/><path class="f" d="M0 1h3v3H0zM12 1h3v3h-3zM0 13h3v3H0zM13 13h3v3h-3z"/></svg></button>
<button title="Ungroup"><svg><path d="M2.500 2.500h7v7h-7zM6.500 6.500h7v7h-7z"/><path class="f" d="M0 1h3v3H0zM8 1h3v3H8zM0 8h3v3H0zM13 5h3v3h-3zM5 13h3v3H5zM13 13h3v3h-3z"/></svg></button>
<button class="m" title="Toolbar options"></button></div>
</div>

<aside class="panels">
<section class="objects"><h2>Object Manager<span></span><button class="tri" title="Menu"></button><button title="Auto hide"><svg><use href="#pin"/></svg></button><button title="Close"><svg><use href="#x"/></svg></button></h2>
<ul><li><i class="minus"></i><svg class="fold"><path fill="#e2a93b" stroke="#a8741a" d="M1.500 12.500v-10h5l1 2h8v3"/><path fill="#fbe08a" stroke="#a8741a" d="M1.500 13.500l4-7h13l-4 7z"/></svg>Book1</li><li class="sel">Sheet1</li></ul></section>
<section class="apps"><h2>Apps<span></span><button class="tri" title="Menu"></button><button title="Auto hide"><svg><use href="#pin"/></svg></button><button title="Close"><svg><use href="#x"/></svg></button></h2>
<div class="appbody">
<div class="apptabs"><svg class="outline"><path class="w" stroke="#777" d="M31 69L5.500 82v19L20 107l11 7"/><path stroke="#777" d="M16 108L5.500 115v83L31 212M29.500 0v70M29.500 212v500"/></svg>
<button class="ar" title="First"><svg><path class="f" d="M4 4h8v1H4zM4 10l4-4 4 4z"/></svg></button><button class="ar" title="Previous"><svg><path class="f" d="M4 10l4-4 4 4z"/></svg></button><button class="ar" title="Next"><svg><path class="f" d="M4 6l4 4 4-4z"/></svg></button><button class="ar" title="Last"><svg><path class="f" d="M4 6l4 4 4-4zM4 11h8v1H4z"/></svg></button>
<button class="vt all">All</button><button class="vt">Connectors</button></div>
<div class="applist">
<a href="#"><svg><path fill="#eef" stroke="#39c" d="M.5.500h38v34H.5z"/><path fill="#1a80b4" stroke="none" d="M0 0h39v5H0z"/><path fill="#ccc" stroke="none" d="M4 7h11v15H4zM3 25h12v3H3zM3 30h12v3H3zM19 8h10v2H19zM19 13h12v10H19z"/><circle cx="28" cy="28" r="11" fill="#4b3" stroke="#394"/><path stroke="#fff" stroke-width="4" d="M28 21v14M21 28h14"/><circle cx="33" cy="7" r="6" fill="red" stroke="none"/></svg>Add Apps</a>
<a href="#"><svg><path fill="#fff" stroke="#238" stroke-width="2" d="M26 9h12v22H26M28 14h7M28 18h7M28 22h7M28 26h7M11 9l15-4v28l-15-3z"/><path stroke="#238" stroke-width="2" d="M14 15l2 8 2-7 2 7 2-8"/><path fill="#00f" stroke="none" d="M3 28h9v-3l6 5-6 6v-3H3z"/></svg>Send<br>Graphs ...</a>
<a href="#"><svg class="or"><path fill="#fff" stroke-width="1" d="M29 5h10v24H29M15 4l14-4v33l-14-5z"/><path class="f" d="M31 9h4v5h3v3h-7zM31 20h7v2h-7zM31 24h7v2h-7z"/><path stroke-width="2" d="M20 22V11h3c4 0 4 6 0 6h-3"/><path class="f" d="M0 31h9v-3l6 5-6 6v-3H0z"/></svg>Send<br>Graphs to...</a>
<a href="#"><svg><path stroke="#800" stroke-width="3" stroke-dasharray="1 3" d="M3 2v22"/><path stroke="#080" stroke-width="3" stroke-dasharray="1 3" d="M9 2v20"/><path stroke="#008" stroke-width="3" stroke-dasharray="1 3" d="M15 2v18"/><path stroke="#880" stroke-width="6" d="M4 34l17-14"/><path stroke="#880" stroke-width="6" d="M27 12a6 6 0 1 0 5 7"/><path fill="#800" stroke="none" d="M20 30h5v8h-5z"/><path fill="#080" stroke="none" d="M27 28h5v10h-5z"/><path fill="#008" stroke="none" d="M35 23h5v15h-5z"/></svg>Graph<br>Maker</a>
<a href="#" class="off"><svg><path stroke="#aaa" stroke-width="2" d="M24 5H6q-5 0-5 5v19q0 5 5 5h19q5 0 5-5v-6"/><path fill="#aaa" stroke="none" d="M15 21L32 5l5 6-16 16-6 1zM34 4l2-1 4 5-2 2z"/><path stroke="#fff" d="M18 20l12-11"/></svg>Graph<br>Annotator</a>
<a href="#" class="off"><svg><path fill="#fff" stroke="#9c9" stroke-width="2" d="M22 1h10l6 7v28H27M1 1h16l8 9v26H1z"/><path stroke="#9c9" stroke-width="2" d="M6 18l6-4 4 3 6-5M6 26l6-4 4 3 6-5M17 1v8h8"/><path fill="#9c9" stroke="none" d="M17 30h22v8H17z"/><path stroke="#fff" d="M20 37v-5h3v3h-3M26 32v4h3v-4M32 32v4h3v-4zM32 34h3"/></svg>Graph<br>Publisher</a>
<a href="#"><svg><path fill="#fff" stroke="#9bd" d="M1 30V9h9l3-4h6l3 4h15v4"/><path fill="#05a" stroke="none" d="M11 12h28l-9 21H1z"/><path stroke="#fff" stroke-width="3" d="M16 27l4-11h8M18 21h8"/><circle cx="31" cy="29" r="6" fill="#05a" stroke="#fff"/><path stroke="#fff" stroke-width="2" d="M31 25v8M27 29h8"/></svg>Fitting<br>Functi...</a>
<a href="#"><svg><path fill="#247" stroke="none" d="M1 2h39v40H1z"/><path fill="#fff" stroke="none" d="M13 11h12l-5 12H6z"/><path fill="#9cf" stroke="none" d="M28 9h12v4h-9l-2 4h10v4H26l-2 5h-5z"/></svg></a>
</div>
<div class="vscroll"><button title="Scroll up"><svg class="chev"><path d="M2 8l4-4 4 4"/></svg></button><i class="thumb"></i><button title="Scroll down"><svg class="chev"><path d="M2 4l4 4 4-4"/></svg></button></div>
</div></section>
</aside>
</main>

<footer class="status">
<svg class="start"><circle cx="16" cy="22" r="14" fill="#d9a392" stroke="none"/><path stroke="#36c" stroke-width="5" d="M28 24l8 8"/><circle cx="18" cy="16" r="12" fill="#c9c4e4" fill-opacity=".8" stroke="#2c6bf2" stroke-width="3"/><path stroke="#446bb8" d="M12 20l4-5 4 5 4-7"/></svg>
<button class="startbtn">&lt;&lt; Start Menu (F1)</button>
<span class="stats">Average=0 Sum=0 Count=0</span><span class="dbl">AU : ON</span><span class="dbl">(2x32) 0</span><span>12KB - [Book1]Sheet1!</span><span>Radian</span>
<em class="mark">CSDN @clarkjs</em>
</footer>
</body>
</html>
```
FILE: styles.css
```css
*{box-sizing:border-box}
html,body{height:100%}
body{margin:0;display:flex;flex-direction:column;overflow:hidden;background:linear-gradient(90deg,#eaecfc,#f3f6fe);font:13px/18px "Open Sans","Noto Sans",sans-serif;color:#111}
button{font:inherit;color:inherit;border:0;padding:0;margin:0;background:none;display:flex;align-items:center;justify-content:center}
a{color:inherit;text-decoration:none}
i{font-style:normal}
svg{width:16px;height:16px;display:block;flex:none;fill:none;stroke:currentColor;shape-rendering:crispEdges;overflow:visible}
.defs{position:absolute;width:0;height:0}
.smooth{shape-rendering:auto}

/* icon colours */
.k{color:#000}
.g{color:#5e6476}
.l{color:#a2a8ba}
.r{color:#f00}
.b{color:#0000d0}
.n{color:#00a000}
.y{color:#f8f000}
.t{color:#008890}
.mg{color:#e0e}
.wh{color:#fff}
.blk{color:#000}
.ln2{color:#20f020}
.bl{color:#36a}
.f{fill:currentColor;stroke:none}
.w{fill:#fff}
.f.w{color:#fff}
.fl{fill:#a6abbd}
.gf{fill:#a0a0a0}
.yy{fill:#ffff50}
.cy{fill:#6fe8f0}
.ol{fill:#8a8a20}
.rf{fill:#f00}
.bf{fill:#33f}
.go{fill:#e8b84a;color:#a67c20}
.sm{transform:translate(3px,-1px)}

/* menu */
.menu{height:28px;display:flex;align-items:center;flex:none;padding-bottom:2px}
.menu a{padding:0 8px 0 7px}
.menu a u{text-underline-offset:2px}
.grip{width:9px;flex:none;align-self:center;height:14px;background:radial-gradient(circle,#9a9cae 0 1px,transparent 2px) 1px 0/4px 4px repeat-y}

/* toolbars */
.dock{display:flex;gap:1px;height:29px;flex:none;padding-bottom:1px}
.bar{display:flex;align-items:center;border-radius:3px;background:linear-gradient(#f8fbff,#e9ebf5 40%,#b3b4cc);border-bottom:2px solid #989ab2;flex:none}
.bar button{width:22px;height:22px;flex:none}
.bar .d{width:31px;justify-content:flex-start;padding-left:3px;gap:3px}
.bar .wide{width:35px;gap:6px}
.d::after{content:"";border:3px solid transparent;border-top:4px solid #000;border-bottom:0;flex:none}
.ga::after{border-top-color:#888}
.bar .on,.vbar .on{background:#d3e7f8;outline:1px solid #0078d7;outline-offset:-1px}
.sep{width:8px;height:20px;flex:none;background:linear-gradient(#c4c6d0,#c4c6d0) 4px 0/1px 100% no-repeat}
.bar .m{width:11px;height:27px;margin:0 0 -1px 2px;align-self:stretch;flex-direction:column;justify-content:flex-end;gap:2px;padding-bottom:3px;border-radius:0 3px 3px 0;background:linear-gradient(#a9aac4,#eeeefa)}
.m::before{content:"";width:6px;height:1px;background:#000}
.m::after{content:"";border:3px solid transparent;border-top:3px solid #000;border-bottom:0}
.combo{position:relative;margin:0 2px;width:74px;height:24px;display:flex;align-items:center;background:#fff;flex:none}
.combo::after{content:"";position:absolute;right:5px;top:10px;border:3px solid transparent;border-top:4px solid #333;border-bottom:0}
.combo select{appearance:none;width:100%;height:100%;border:0;background:none;padding:0 3px;font:14px/20px "Open Sans",sans-serif;color:#222;opacity:1}
.combo.zoom{width:72px;height:23px;background:linear-gradient(90deg,#fff 59px,#dcdde8 59px)}
.combo.dis{background:#efeff1;border:1px solid #a4a4a4;box-shadow:inset 0 0 0 1px #fff}
.combo.dis select{color:#8a8a8a}
.combo.dis::after{border-top-color:#888}
.combo.font{width:160px;background:linear-gradient(90deg,#f1f4fc 142px,#efeff1 142px)}
.tt{margin:0 3px 0 6px}
.combo.line .ln{width:26px;margin-left:4px}
.bar .ser{font:bold 15px/16px "Liberation Serif",serif}
.ser sup,.ser sub{font-size:9px;font-weight:400;line-height:9px}
.ser sup{align-self:flex-start}
.ser sub{align-self:flex-end}
.both{display:flex;flex-direction:column}
.both b{font-size:9px;font-weight:400;line-height:9px}
.bar .it{font-style:italic}
.bar .un{text-decoration:underline}
.bar .big{font-size:18px}
.bar .swatch{width:54px;justify-content:flex-start;padding-left:4px;gap:6px}
.swatch i{width:36px;height:16px;border:1px solid #a4a4a4;background:#e9ebf4}
.swatch::after{content:"";border:3px solid transparent;border-top:4px solid #888;border-bottom:0}

/* middle */
.main{flex:1;display:grid;grid-template-columns:24px 36px 1fr 32px 190px;min-height:0}
.sidetabs{display:flex;flex-direction:column;align-items:flex-start;gap:14px;padding-top:3px}
.sidetabs button{writing-mode:vertical-rl;width:22px;padding:4px 6px 26px 1px;background:#f0f0f0;border:solid #d6d6d6;border-width:0 1px 1px 0;font:13px/14px "Liberation Mono",monospace;color:#555;justify-content:flex-start;white-space:pre}
.vdock{display:flex;flex-direction:column;align-items:flex-start;gap:1px}
.vbar{width:35px;display:flex;flex-direction:column;border-radius:3px;background:linear-gradient(90deg,#f8fbff,#e9ebf5 40%,#b3b4cc);border-left:1px solid #b4b6ca;border-right:1px solid #989ab2}
.vbar .grip{width:26px;height:9px;margin-left:3px;align-self:flex-start;background:radial-gradient(circle,#9a9cae 0 1px,transparent 2px) 0 2px/4px 4px repeat-x}
.vbar button{width:22px;height:22px;margin-left:1px;flex:none}
.vbar .d{width:31px;justify-content:flex-start;padding-left:3px;gap:3px}
.vbar .m{width:auto;height:13px;margin:0;flex-direction:row;justify-content:flex-end;gap:2px;padding-right:3px;background:linear-gradient(90deg,#eeeefa,#a9aac4)}
.vbar .m::before{width:2px;height:6px}
.vbar .m::after{border:3px solid transparent;border-left:4px solid #000;border-right:0}
.vbar .sep{width:20px;height:8px;margin-left:4px;background:linear-gradient(#c4c6d0,#c4c6d0) 0 4px/100% 1px no-repeat}
.right .vbar{width:27px;margin-left:1px}
.right .grip{width:18px}
.center{display:flex;flex-direction:column;min-width:0;min-height:0}
.mdi{flex:1;position:relative;background:#ababab;border:2px solid #6f6f6f;border-right:1px solid #f4f4f4;border-bottom:1px solid #f4f4f4;min-height:0}
.low{height:32px;padding:2px 0 1px}
.feedback{position:absolute;right:24px;bottom:11px;font-size:18px;line-height:24px;color:#0066cc;text-decoration:underline}

/* workbook window */
.win{position:absolute;left:25px;top:24px;width:495px;height:403px;border:1px solid #000;border-radius:5px 5px 0 0;padding:0 8px 9px;background:linear-gradient(#9ab4d2,#b9d1ea 38px,#d8e6f4 120px,#b9d1ea 128px);box-shadow:inset 1px 1px 0 #fff,inset -1px -1px 0 #3ccbe4;display:flex;flex-direction:column}
.title{height:37px;display:flex;align-items:center;gap:2px;flex:none;padding:6px 2px 0 2px}
.title h1{margin:0 auto 0 2px;font-size:15px;line-height:20px;font-weight:400;color:#000}
.title svg.book{width:20px;height:20px}
.title button{width:42px;height:24px;border:1px solid #5b7696;border-radius:2px;background:linear-gradient(#bcd0e6 45%,#97b5d6 50%,#b4cde8);box-shadow:inset 0 0 0 1px #d4e3f2}
.title button svg{width:18px;height:16px}
.title .close{background:linear-gradient(#e3a598 45%,#b83a26 50%,#cf6a52);border-color:#4a1420;box-shadow:inset 0 0 0 1px #e8b0a6}
.client{flex:1;display:flex;flex-direction:column;border:2px solid #7c7c7c;border-right:2px solid #fff;border-bottom:2px solid #fff;background:#e0dfe4;min-height:0}
.view{flex:1;display:flex;min-height:0}
.cells{flex:1;overflow:hidden}
table{border-collapse:separate;border-spacing:0;table-layout:fixed;width:276px;font:14px/19px "Liberation Sans",sans-serif;color:#111}
th,td{padding:0;height:20px;border:solid #bdbdbd;border-width:0 1px 1px 0;background:#f4f4f4}
th{font-weight:400;text-align:right;padding-right:3px;background:#e0dfe4;border-color:#000}
tr>:first-child{width:108px}
thead th{height:30px;text-align:center;padding:0}
.lab td{background:#fafac8}
.fx td{background:#f7f5ae}
.vscroll{width:21px;background:#f0f0f0;display:flex;flex-direction:column;color:#555;flex:none}
.vscroll button{height:21px;flex:none}
.vscroll .thumb{background:#cdcdcd;height:97px;margin-right:1px}
.vscroll button:last-child{margin-top:auto}
.sheet{margin-bottom:5px;border-bottom:1px solid #000}
.chev{width:12px;height:12px;stroke-width:2;shape-rendering:auto}
.tabs{height:21px;display:flex;background:#c8c8c8;flex:none;border-top:1px solid #000}
.tabs>button{width:21px;border:1px solid #888;background:#f0f0f0;color:#444}
.tabs>button.pl{font-size:16px;color:#000}
.tabs>button.v{font:14px/16px "Liberation Sans",sans-serif}
.tab{position:relative;width:86px;padding-left:10px;font:18px/22px "Liberation Mono",monospace;color:#000}
.tab svg{position:absolute;left:0;top:0;width:86px;height:20px;shape-rendering:auto}
.tab span{position:relative}
.rest{flex:1;border-right:1px solid #000}
.hscroll{width:112px;display:flex;background:#f0f0f0;color:#555;margin-left:4px;border:solid #000;border-width:0 1px}
.hscroll button{width:21px}
.hscroll i{width:67px;background:#cdcdcd}
.size{width:22px;margin-left:4px;border-left:1px solid #000;background:#f0f0f0;color:#bbb;padding:6px}
.size svg{width:13px;height:13px}

/* right panels */
.panels{display:flex;flex-direction:column;gap:5px;min-height:0;background:#f3f6fe}
h2{margin:0;height:28px;display:flex;align-items:center;gap:4px;padding:0 3px 0 4px;font-size:14px;line-height:20px;font-weight:400;background:linear-gradient(#bccbdb,#d7e4f1);color:#111;flex:none}
h2 span{flex:1}
h2 button{width:13px;height:14px;color:#000}
h2 svg{width:12px;height:12px}
h2 .tri::after{content:"";border:5px solid transparent;border-top:5px solid #000;border-bottom:0}
.objects ul{margin:0;padding:1px 2px;list-style:none;height:143px;border:2px solid #777;background:#fff;font-size:14px;line-height:22px}
.objects li{display:flex;align-items:center;gap:3px;padding-left:1px;height:22px}
.objects .sel{background:#0078d7;color:#fff;padding-left:33px}
.minus{width:11px;height:11px;border:1px solid #888;background:linear-gradient(#36c,#36c) center/7px 1px no-repeat,#fff;margin-right:2px}
.fold{width:19px;height:15px}
.apps{flex:1;display:flex;flex-direction:column;min-height:0}
.appbody{flex:1;display:flex;min-height:0;border-top:1px solid #888;background:#fff;border-bottom:1px solid #888}
.apptabs{position:relative;width:30px;background:#f0f0f0;overflow:hidden;padding:1px 6px 0 8px;flex:none}
.outline{position:absolute;left:0;top:0;width:30px;height:100%;overflow:hidden}
.apptabs button{position:relative;width:16px}
.ar{height:16px;color:#000}
.vt{writing-mode:vertical-rl;justify-content:flex-start;font-size:14px;line-height:16px;height:98px;padding-top:4px}
.vt.all{height:44px;padding-top:14px;font-weight:700}
.applist{flex:1;overflow:hidden;padding:4px 0 0 7px}
.applist a{display:block;width:80px;height:94px;text-align:center;font-size:15px;line-height:20px;color:#111;white-space:nowrap}
.applist svg{width:40px;height:40px;margin:0 auto 4px;shape-rendering:auto}
.applist .off{color:#777}
.or{color:#d24726}
.apps .vscroll{width:23px;padding-right:4px}
.apps .vscroll .thumb{flex:0 1 420px;margin:0}
.apps .vscroll button:last-child{height:26px}

/* status bar */
.status{position:relative;height:25px;flex:none;display:flex;align-items:center;background:#f0f0f0;border-top:1px solid #d0d0d0;font-size:13px;padding:2px 0 0 37px}
.startbtn{margin-right:auto;padding-left:6px;border-left:1px solid #ccc;font-size:14px}
.status span{border-left:1px solid #ccc;padding:0 7px 0 6px;line-height:22px}
.status .stats{font-size:14px}
.status .dbl{box-shadow:-6px 0 0 -5px #ccc;margin-left:5px}
.start{position:absolute;left:0;bottom:0;width:38px;height:38px;shape-rendering:auto}
.mark{position:absolute;right:14px;top:-2px;font:13px/20px "Liberation Sans",sans-serif;color:#999;opacity:.8}
```
